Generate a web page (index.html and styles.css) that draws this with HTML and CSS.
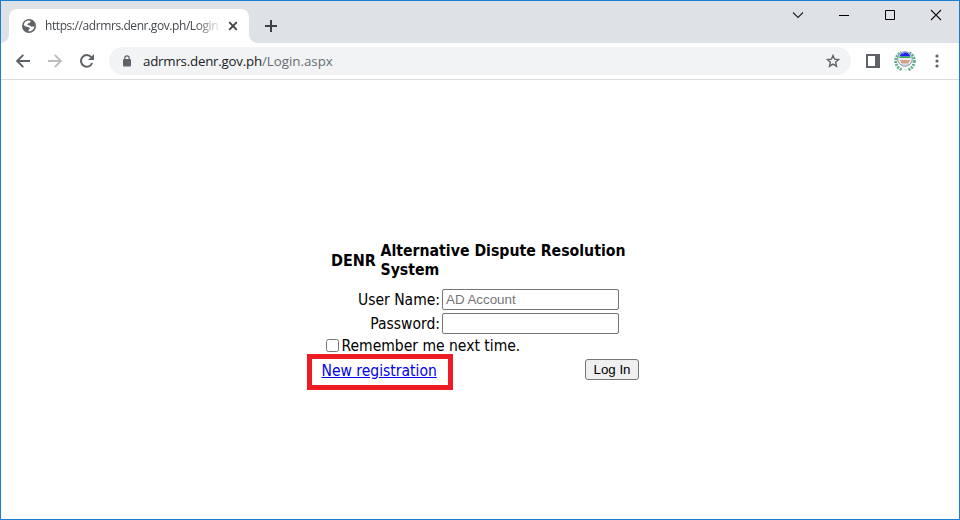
FILE: index.html
```html
<!DOCTYPE html>
<html lang="en">
<head>
<meta charset="utf-8">
<title>Login</title>
<link rel="stylesheet" href="styles.css">
</head>
<body>
<div class="window">
  <header class="tabstrip">
    <div class="tab">
      <svg class="globe" width="14" height="14" viewBox="0 0 14 14"><circle cx="7" cy="7" r="7" fill="#5f6368"/><path d="M7 1.6 8.8 2 7.8 3.7 5.8 4.4 5.5 6 7.6 6.5 9.4 7.8 11.7 7.5 12.3 6.3A5.5 5.5 0 0 1 6.6 12.4V10.7L8 9.6 6.8 8.2 3.6 7.6 1.7 5.9A5.5 5.5 0 0 1 7 1.6Z" fill="#fff"/></svg>
      <span class="tab-title">https://adrmrs.denr.gov.ph/Login</span>
      <svg class="tab-close" width="10" height="10" viewBox="0 0 10 10"><path d="M1.2 1.2 8.8 8.8M8.8 1.2 1.2 8.8" stroke="#3c4043" stroke-width="1.8"/></svg>
    </div>
    <svg class="new-tab" width="12" height="12" viewBox="0 0 12 12"><path d="M6 0V12M0 6H12" stroke="#3c4043" stroke-width="2"/></svg>
    <div class="controls">
      <svg width="12" height="12" viewBox="0 0 12 12"><path d="M1 3.5 6 8.5 11 3.5" fill="none" stroke="#222" stroke-width="1.1"/></svg>
      <svg width="12" height="12" viewBox="0 0 12 12"><path d="M1 6.5H11" stroke="#000"/></svg>
      <svg width="12" height="12" viewBox="0 0 12 12"><path d="M1.5 1.5H10.5V10.5H1.5Z" fill="none" stroke="#000"/></svg>
      <svg width="12" height="12" viewBox="0 0 12 12"><path d="M1 1 11 11M11 1 1 11" stroke="#111" stroke-width="1.1"/></svg>
    </div>
  </header>
  <nav class="toolbar">
    <svg class="back" width="14" height="14" viewBox="0 0 14 14"><path d="M14 7H1.5M7.3 .8 1.2 7 7.3 13.2" fill="none" stroke="#5f6368" stroke-width="1.9"/></svg>
    <svg class="forward" width="14" height="14" viewBox="0 0 14 14"><path d="M0 7H12.5M6.7 .8 12.8 7 6.7 13.2" fill="none" stroke="#bbbdbf" stroke-width="1.9"/></svg>
    <svg class="reload" width="14" height="14" viewBox="0 0 14 14"><path d="M12.2 9A5.8 5.8 0 1 1 11.3 3.2" fill="none" stroke="#5f6368" stroke-width="2"/><path d="M14 0V6H8Z" fill="#5f6368"/></svg>
    <div class="omnibox">
      <svg width="8" height="12" viewBox="0 0 8 12"><rect y="4" width="8" height="7.5" rx="1" fill="#5f6368"/><path d="M1.8 4.5V3A2.2 2.2 0 0 1 6.2 3V4.5" fill="none" stroke="#5f6368" stroke-width="1.2"/></svg>
      <span class="url"><span class="host">adrmrs.denr.gov.ph</span><span class="path">/Login.aspx</span></span>
      <svg class="star" width="14" height="14" viewBox="0 0 14 14"><path d="M7 1.5 8.6 5.2 12.6 5.6 9.6 8.2 10.5 12.2 7 10.1 3.5 12.2 4.4 8.2 1.4 5.6 5.4 5.2Z" fill="none" stroke="#5f6368" stroke-width="1.4"/></svg>
    </div>
    <svg class="panel" width="14" height="14" viewBox="0 0 14 14"><path d="M0 0H14V14H0ZM2 2V12H9V2Z" fill="#5f6368" fill-rule="evenodd"/></svg>
    <svg class="avatar" width="22" height="22" viewBox="0 0 22 22"><circle cx="11" cy="11" r="9.3" fill="none" stroke="#5fae8c" stroke-width="3" stroke-dasharray="2 1"/><path d="M7 0H15V4H7Z M8 18H14V22H8Z" fill="#fff"/><circle cx="11" cy="9" r="7.3" fill="#e9edf2" stroke="#8295a5"/><path d="M5.5 6.5A5.8 6 0 0 1 16.5 6.5Z" fill="#1c24f0"/><path d="M7.5 3.5 10 1.8V4Z" fill="#7080ff"/><path d="M5.5 6.5H16.5V8H5.5Z" fill="#2fae45"/><path d="M6 10H16L14.5 13.5H7.5Z" fill="#d3a285"/><path d="M7 14.5Q11 16 15 14.5" fill="none" stroke="#b8c4cc"/><path d="M9 20Q11 18 13 20" fill="none" stroke="#cce4dc"/></svg>
    <svg class="menu" width="4" height="14" viewBox="0 0 4 14"><g fill="#5f6368"><circle cx="2" cy="2" r="1.6"/><circle cx="2" cy="7" r="1.6"/><circle cx="2" cy="12" r="1.6"/></g></svg>
  </nav>
  <main class="page">
    <form class="login">
      <div class="heading"><b class="org">DENR</b><b class="system"><span class="system-line">Alternative Dispute Resolution</span><br>System</b></div>
      <div class="field"><label class="user-label" for="user">User Name:</label><input id="user" type="text" placeholder="AD Account"></div>
      <div class="field"><label class="pass-label" for="pass">Password:</label><input id="pass" type="password"></div>
      <div class="remember"><input id="remember" type="checkbox"><label for="remember">Remember me next time.</label></div>
      <div class="actions"><div class="highlight"><a href="#">New registration</a></div><button type="button">Log In</button></div>
    </form>
  </main>
</div>
</body>
</html>
```
FILE: styles.css
```css
* { box-sizing: border-box; }
body { margin: 0; background: #fff; }
svg { display: block; flex: none; }
.window { width: 960px; height: 520px; border: 1px solid #1a7fd0; overflow: hidden; font-family: "Open Sans", sans-serif; }
.tabstrip { height: 42px; background: #dee1e6; display: flex; align-items: flex-start; }
.tab { position: relative; width: 240px; height: 34px; margin: 8px 0 0 8px; padding: 0 11px 0 13px; background: #fff; border-radius: 8px 8px 0 0; display: flex; align-items: center; }
.tab::before, .tab::after { content: ""; position: absolute; bottom: 0; width: 8px; height: 8px; }
.tab::before { left: -8px; background: radial-gradient(circle at 0 0, transparent 7.5px, #fff 8px); }
.tab::after { right: -8px; background: radial-gradient(circle at 100% 0, transparent 7.5px, #fff 8px); }
.tab-title { width: 176px; margin-left: 9px; white-space: nowrap; font-size: 12px; letter-spacing: -0.42px; line-height: 18px; color: #45494d; -webkit-mask-image: linear-gradient(90deg, #000 150px, transparent 178px); mask-image: linear-gradient(90deg, #000 150px, transparent 178px); }
.tab-close { margin-left: 7px; }
.new-tab { margin: 19px 0 0 16px; }
.controls { display: flex; gap: 34px; margin: 8px 17px 0 auto; }
.toolbar { height: 37px; border-bottom: 1px solid #dadce0; display: flex; align-items: center; }
.back { margin-left: 15px; }
.forward { margin-left: 18px; }
.reload { margin-left: 18px; }
.omnibox { width: 742px; height: 28px; margin-left: 15px; padding: 0 11px 0 14px; border-radius: 14px; background: #f1f3f4; display: flex; align-items: center; }
.url { margin-left: 12px; font-size: 13.3px; line-height: 20px; white-space: nowrap; }
.host { color: #202124; letter-spacing: -0.22px; }
.path { color: #6a6e73; }
.star { margin-left: auto; }
.panel { margin-left: 15px; }
.avatar { margin-left: 14px; }
.menu { margin-left: 19px; }
.page { font-family: "DejaVu Sans Condensed", "DejaVu Sans", sans-serif; font-stretch: condensed; font-size: 15.5px; line-height: 19px; color: #000; }
.login { width: 332px; margin: 161px 0 0 306px; white-space: nowrap; }
.heading { display: flex; align-items: center; height: 38px; padding-left: 24px; gap: 4px; font-size: 15.7px; }
.org { width: 45.5px; font-size: 16px; padding-top: 1px; }
.field { display: flex; align-items: center; justify-content: flex-end; height: 24px; padding-right: 20px; gap: 2px; }
.field label { padding-top: 2px; }
.heading + .field { margin-top: 8px; }
.field input { width: 177px; height: 21px; margin: 0; padding: 1px 3px; border: 1px solid #767676; border-radius: 2px; font: 13.333px "Liberation Sans", sans-serif; }
.field input::placeholder { color: #757575; }
.remember { display: flex; align-items: center; height: 21px; padding-left: 19px; }
.remember input { width: 13px; height: 13px; margin: 0 2.5px 1px 0; }
.remember label { padding-top: 1px; }
.actions { display: flex; align-items: flex-start; justify-content: space-between; }
.highlight { width: 146px; height: 36px; margin-top: -2px; border: 5px solid #ed1c24; padding: 3px 0 0 9.5px; }
.highlight a { color: #0000ee; text-underline-offset: 1px; }
.actions button { width: 54px; height: 21px; margin-top: 3px; padding: 0; border: 1px solid #767676; border-radius: 3px; background: #efefef; color: #000; font: 13.333px "Liberation Sans", sans-serif; }
```
